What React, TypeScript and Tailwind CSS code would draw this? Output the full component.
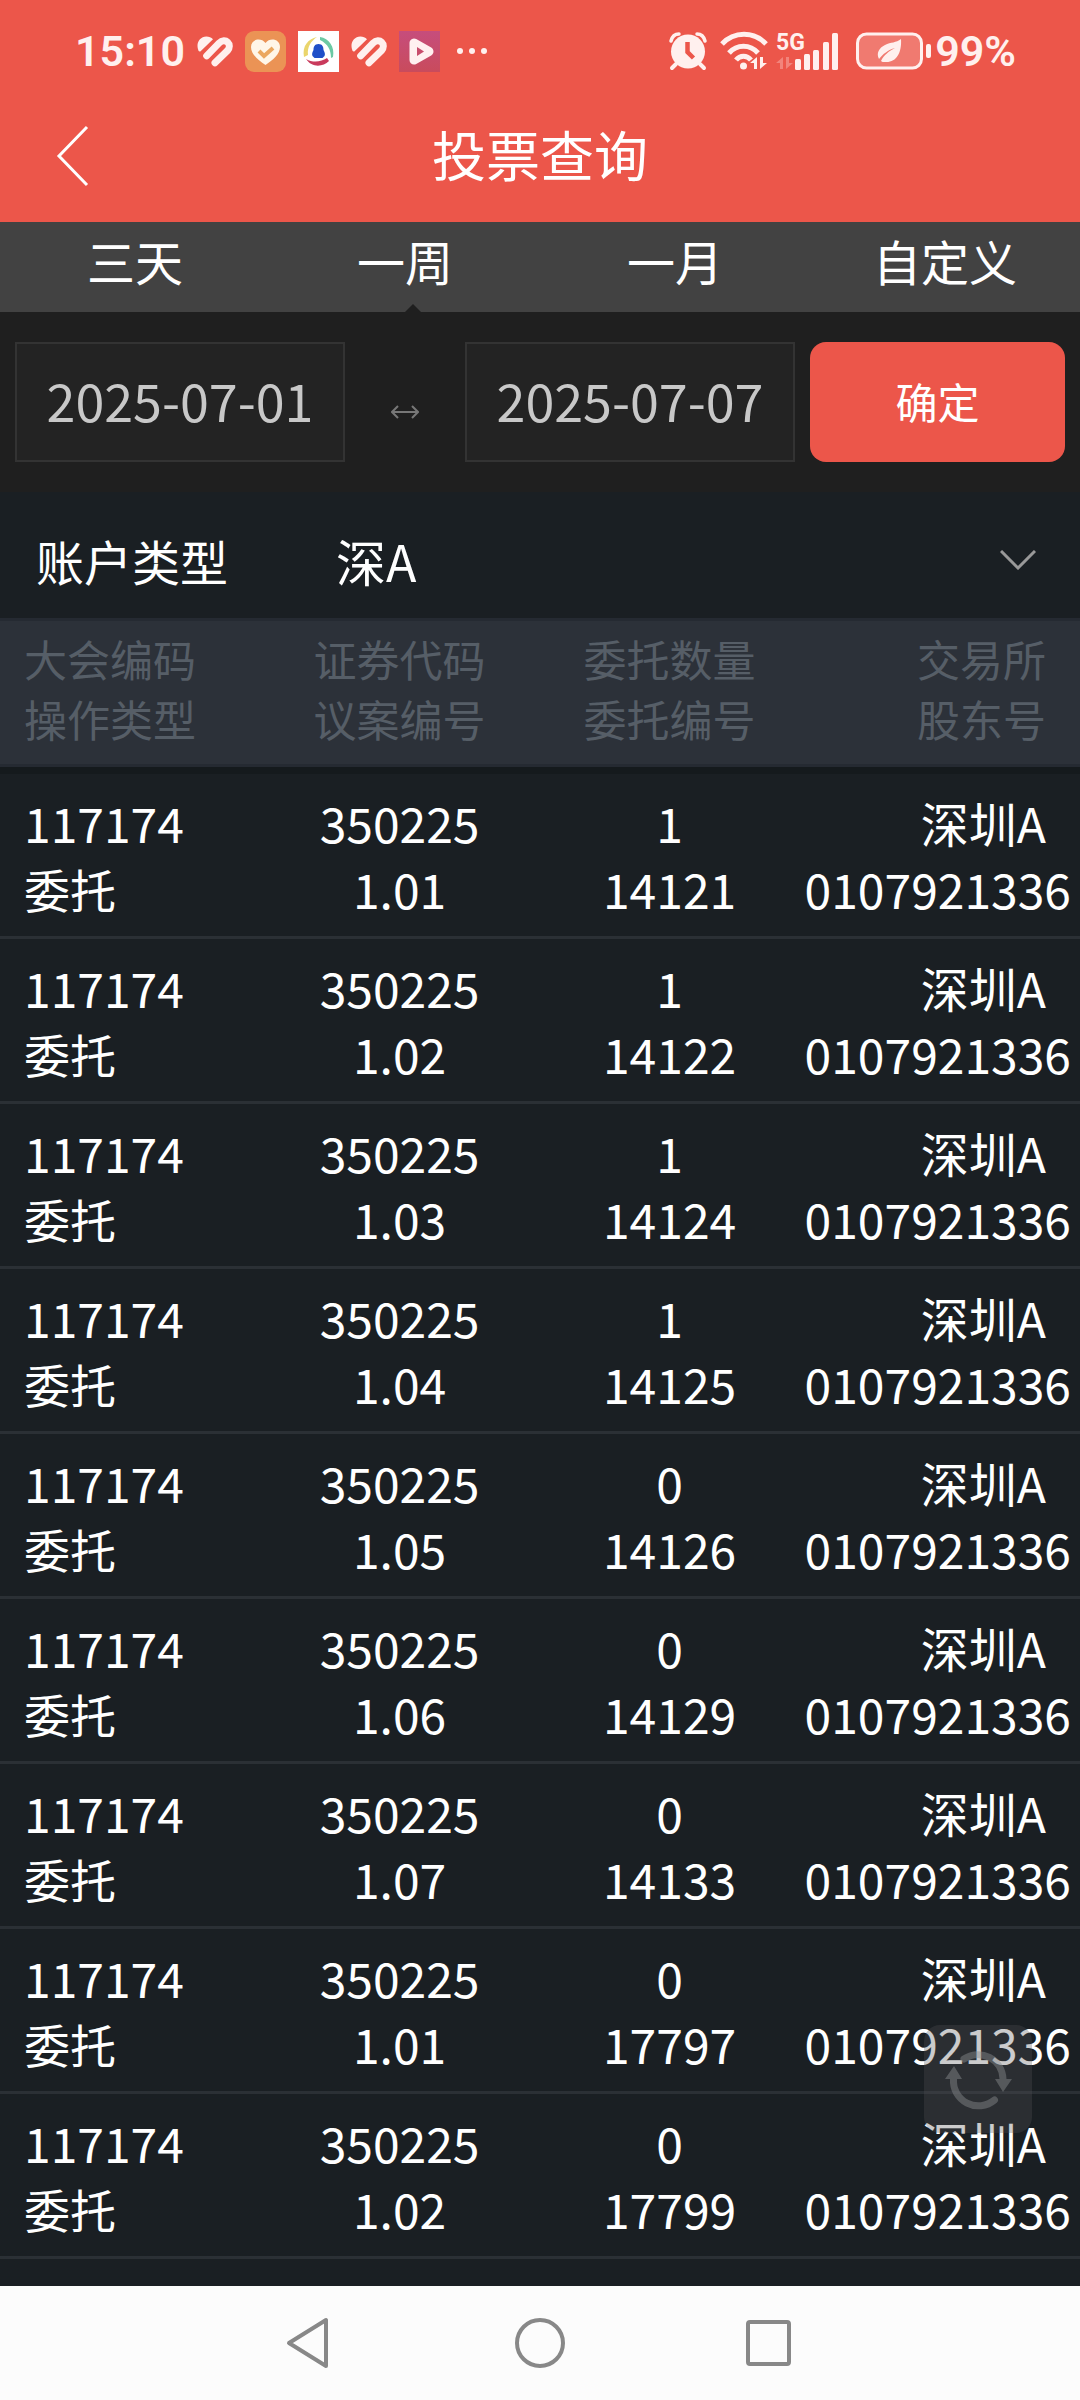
import { useState } from 'react'

type Period = '三天' | '一周' | '一月' | '自定义'

interface VoteRecord {
  meeting: string
  operation: string
  code: string
  proposal: string
  quantity: number
  entrustNo: string
  exchange: string
  holder: string
}

const PERIODS: Period[] = ['三天', '一周', '一月', '自定义']

const HEADERS = [
  ['大会编码', '操作类型'],
  ['证券代码', '议案编号'],
  ['委托数量', '委托编号'],
  ['交易所', '股东号'],
]

const ENTRUSTS: [string, number, string][] = [
  ['1.01', 1, '14121'],
  ['1.02', 1, '14122'],
  ['1.03', 1, '14124'],
  ['1.04', 1, '14125'],
  ['1.05', 0, '14126'],
  ['1.06', 0, '14129'],
  ['1.07', 0, '14133'],
  ['1.01', 0, '17797'],
  ['1.02', 0, '17799'],
]

const RECORDS: VoteRecord[] = ENTRUSTS.map(([proposal, quantity, entrustNo]) => ({
  meeting: '117174',
  operation: '委托',
  code: '350225',
  proposal,
  quantity,
  entrustNo,
  exchange: '深圳A',
  holder: '0107921336',
}))

function StripedHeart() {
  return (
    <svg width="36" height="31" viewBox="0 0 108 92" fill="none" stroke="#fff0ee" strokeWidth="21" strokeLinecap="round" strokeLinejoin="round">
      <path d="M4 42C-4 22 8 1 28 1c8 0 15 3 20 8L10 46c-3 0-5-1-6-4Z" fill="#fff0ee" stroke="none" />
      <path d="M29 59 66 21c19-19 42 4 25 23L54 80" />
    </svg>
  )
}

function StatusBar() {
  return (
    <div className="flex h-[102px] items-center justify-between pl-[75px] pr-[64px] text-[#fff0ee]">
      <div className="flex items-center gap-3">
        <span className="font-[Roboto] text-[43px] leading-none font-semibold">15:10</span>
        <StripedHeart />
        <svg width="41" height="41" viewBox="0 0 41 41">
          <rect width="41" height="41" rx="9" fill="#eb9355" />
          <path d="M20.500 34C13 29 6 23 6 16c0-8 10-10 14.500-4C25 6 35 8 35 16c0 7-7 13-14.500 18Z" fill="#fff6e8" />
          <path d="m14 20 5 5 9-8" fill="none" stroke="#eba75f" strokeWidth="4" />
        </svg>
        <svg width="41" height="41" viewBox="0 0 41 41" fill="none">
          <path fill="#fff" d="M0 0h41v41H0z" />
          <path d="M6 26C4 15 10 8 19 6c-6 4-10 10-9 18Z" fill="#ead56c" />
          <path d="M22 6c9 1 15 10 13 20l-2 1c0-8-3-14-11-18Z" fill="#6cc9a4" />
          <path d="M8 28c7 4 15 3 21-1l2 3c-6 6-17 7-23-2Z" fill="#c93a5c" />
          <path d="M20.500 13c4 0 5 3 5 6 1 2 2 4 1 6l-2 2h-8l-2-2c-1-2 0-4 1-6 0-3 1-6 5-6Z" fill="#1f4fc8" />
        </svg>
        <StripedHeart />
        <svg width="41" height="41" viewBox="0 0 41 41">
          <defs>
            <linearGradient id="player" x1="0" y1="0" x2="0" y2="1">
              <stop stopColor="#c64d7c" />
              <stop offset="1" stopColor="#c94b5c" />
            </linearGradient>
          </defs>
          <path fill="url(#player)" d="M0 0h41v41H0z" />
          <path d="M15 12v17l15-8.500Z" fill="none" stroke="#fff0f0" strokeWidth="9" strokeLinejoin="round" />
          <path d="M18 16v9l7-4.500Z" fill="#c84c6c" />
        </svg>
        <svg className="ml-1" width="32" height="8" viewBox="0 0 32 8" fill="#fff0ee">
          <circle cx="4" cy="4" r="3" />
          <circle cx="16" cy="4" r="3" />
          <circle cx="28" cy="4" r="3" />
        </svg>
      </div>
      <div className="flex items-center gap-2">
        <svg className="mr-1" width="40" height="40" viewBox="0 0 40 40" fill="none" stroke="#fff0ee">
          <circle cx="20" cy="20.500" r="17" fill="#fff0ee" stroke="none" />
          <path d="M3 10c1-4 4-7 8-7M37 10c-1-4-4-7-8-7" strokeWidth="3.500" strokeLinecap="round" />
          <path d="m8 33-4 4M32 33l4 4" strokeWidth="4" strokeLinecap="round" />
          <path d="M19.500 11v10l6 6" stroke="#ec564a" strokeWidth="4.500" />
        </svg>
        <svg width="48" height="40" viewBox="0 0 48 40" fill="none" stroke="#fff0ee" strokeWidth="5">
          <path d="M2 13c12-13 32-13 44 0M9 22c8-9 21-9 29 0M16 29c4-5 11-5 15 0" />
          <circle cx="23.500" cy="35" r="3.500" fill="#fff0ee" stroke="none" />
          <path d="M37 26v12h-3v-6h-4zM40 26v12l7-6h-4v-6z" fill="#fff0ee" stroke="none" />
        </svg>
        <svg className="mr-2" width="64" height="48" viewBox="0 -4 64 48" fill="#fff0ee">
          <text x="0" y="19" fontFamily="Roboto" fontSize="23" fontWeight="700">5G</text>
          <path d="M7 26v12H4v-6H0zM10 26v12l7-6h-4v-6z" opacity="0.300" />
          <rect x="19" y="28" width="6" height="11" rx="1.500" />
          <rect x="28" y="23" width="6" height="16" rx="1.500" />
          <rect x="37" y="19" width="6" height="20" rx="1.500" />
          <rect x="47" y="11" width="6" height="28" rx="1.500" />
          <rect x="56" y="2" width="6" height="37" rx="1.500" />
        </svg>
        <div className="flex items-center gap-1">
          <svg width="75" height="38" viewBox="0 0 75 38">
            <rect x="1.500" y="2" width="64" height="34" rx="9" fill="#f07a70" stroke="#fff0ee" strokeWidth="3" />
            <rect x="70" y="12" width="5" height="14" rx="2" fill="#fff0ee" />
            <path d="M45 7c1 14-5 24-16 23-2 0-3 0-4-1 3-6 8-10 14-13-7 2-12 6-16 11-3-6 0-11 6-14 6-3 11-2 16-6Z" fill="#fff0ee" />
          </svg>
          <span className="font-[Roboto] text-[43px] leading-none font-semibold">99%</span>
        </div>
      </div>
    </div>
  )
}

function SystemNav() {
  return (
    <nav className="mt-auto flex h-[114px] items-center justify-center gap-[180px] bg-[#fcfcfc]">
      <button type="button" aria-label="返回">
        <svg width="50" height="52" viewBox="0 0 50 52" fill="none" stroke="#888" strokeWidth="4" strokeLinejoin="round">
          <path d="M41 3v46L4 26Z" />
        </svg>
      </button>
      <button type="button" aria-label="主页">
        <svg width="50" height="50" viewBox="0 0 50 50" fill="none" stroke="#888" strokeWidth="4">
          <circle cx="25" cy="25" r="23" />
        </svg>
      </button>
      <button type="button" aria-label="最近任务">
        <svg width="50" height="50" viewBox="0 0 50 50" fill="none" stroke="#888" strokeWidth="4">
          <rect x="3" y="4" width="41" height="42" rx="2" />
        </svg>
      </button>
    </nav>
  )
}

export default function App() {
  const [period, setPeriod] = useState<Period>('一周')
  const [start, setStart] = useState('2025-07-01')
  const [end, setEnd] = useState('2025-07-07')

  return (
    <div className="relative flex min-h-screen flex-col bg-[#1a1f23] font-['Noto_Sans_CJK_SC',sans-serif] text-white">
      <header className="bg-[#ec564a]">
        <StatusBar />
        <div className="grid h-[120px] grid-cols-[1fr_auto_1fr] items-center pb-3">
          <button type="button" aria-label="返回" className="pl-14">
            <svg width="34" height="62" viewBox="0 0 34 62" fill="none" stroke="#fff" strokeWidth="3">
              <path d="M31 2 3 31l28 29" />
            </svg>
          </button>
          <h1 className="pb-1 text-[54px] leading-none">投票查询</h1>
        </div>
      </header>

      {/* Period tabs */}
      <div role="tablist" className="grid h-[90px] grid-cols-4 bg-[#424242]">
        {PERIODS.map(p => (
          <button
            key={p}
            type="button"
            role="tab"
            aria-selected={period === p}
            onClick={() => setPeriod(p)}
            className="relative pb-3.5 text-[48px] leading-none"
          >
            {p}
            {period === p && (
              <svg className="absolute bottom-0 left-1/2" width="16" height="8" viewBox="0 0 16 8">
                <path d="m8 0 8 8H0Z" fill="#1f1f1f" />
              </svg>
            )}
          </button>
        ))}
      </div>

      {/* Date range */}
      <form
        className="flex h-[180px] items-center bg-[#1f1f1f] px-[15px]"
        onSubmit={e => e.preventDefault()}
      >
        <input
          aria-label="开始日期"
          value={start}
          onChange={e => setStart(e.target.value)}
          className="h-[120px] w-0 grow-[33] border-2 border-[#333] bg-[#232323] pb-1.5 text-center text-[52px] text-[#c8c8c8]"
        />
        <span className="flex w-[120px] justify-center pt-5">
          <svg width="28" height="14" viewBox="0 0 28 14" fill="none" stroke="#777" strokeWidth="2">
            <path d="M1 7h26M7 1 1 7l6 6M21 1l6 6-6 6" />
          </svg>
        </span>
        <input
          aria-label="结束日期"
          value={end}
          onChange={e => setEnd(e.target.value)}
          className="h-[120px] w-0 grow-[33] border-2 border-[#333] bg-[#232323] pb-1.5 text-center text-[52px] text-[#c8c8c8]"
        />
        <button type="submit" className="ml-[15px] h-[120px] w-[255px] rounded-2xl bg-[#ec564a] pb-1 text-[42px]">
          确定
        </button>
      </form>

      {/* Account type */}
      <div className="relative flex h-[126px] items-center pt-2.5 pl-9 text-[48px]">
        <label htmlFor="account" className="w-[300px]">账户类型</label>
        <select id="account" className="grow appearance-none bg-transparent text-[50px] outline-none">
          <option>深A</option>
          <option>沪A</option>
        </select>
        <svg className="pointer-events-none absolute right-11" width="36" height="20" viewBox="0 0 36 20" fill="none" stroke="#999" strokeWidth="3">
          <path d="m1 1 17 17L35 1" />
        </svg>
      </div>

      <table className="w-full table-fixed border-separate border-spacing-0 whitespace-nowrap">
        <colgroup>
          <col className="w-[24%]" />
          <col className="w-[26%]" />
          <col className="w-[24%]" />
          <col className="w-[26%]" />
        </colgroup>
        <thead className="text-[43px] leading-[60px] text-[#565e67]">
          <tr>
            {HEADERS.map(([top, bottom], i) => (
              <th
                key={top}
                scope="col"
                className={`border-y-[3px] border-[#252a32] bg-[#2c3139] pt-[7px] pb-4 font-normal ${
                  i === 0 ? 'pl-6 text-left' : i === 3 ? 'pr-[34px] text-right' : 'text-center'
                }`}
              >
                <div>{top}</div>
                <div>{bottom}</div>
              </th>
            ))}
          </tr>
        </thead>
        <tbody className="text-[48px] leading-[66px]">
          <tr aria-hidden="true">
            <td colSpan={4} className="h-[7px] bg-[#151a1d]"></td>
          </tr>
          {RECORDS.map(r => (
            <tr key={r.entrustNo}>
              <td className="border-b-[3px] border-[#2b3035] py-[15px] pl-6">
                <div>{r.meeting}</div>
                <div className="text-[46px]">{r.operation}</div>
              </td>
              <td className="border-b-[3px] border-[#2b3035] py-[15px] text-center">
                <div>{r.code}</div>
                <div>{r.proposal}</div>
              </td>
              <td className="border-b-[3px] border-[#2b3035] py-[15px] text-center">
                <div>{r.quantity}</div>
                <div>{r.entrustNo}</div>
              </td>
              <td className="border-b-[3px] border-[#2b3035] py-[15px] text-right">
                <div className="pr-[34px]">{r.exchange}</div>
                <div className="pr-[9px]">{r.holder}</div>
              </td>
            </tr>
          ))}
        </tbody>
      </table>

      <button
        type="button"
        aria-label="刷新"
        className="absolute right-12 bottom-[267px] size-[108px] rounded-2xl bg-[#525255]/30"
      >
        <svg width="108" height="108" viewBox="0 0 108 108" fill="none" stroke="#8a8d90" strokeWidth="7" opacity="0.450">
          <path d="M40 34a25 25 0 0 1 39 20M29.500 54a25 25 0 0 0 41 21" strokeLinecap="round" />
          <path d="M71 54h17l-9 13ZM21 54h17l-8-13Z" fill="#8a8d90" stroke="none" />
        </svg>
      </button>

      <SystemNav />
    </div>
  )
}
